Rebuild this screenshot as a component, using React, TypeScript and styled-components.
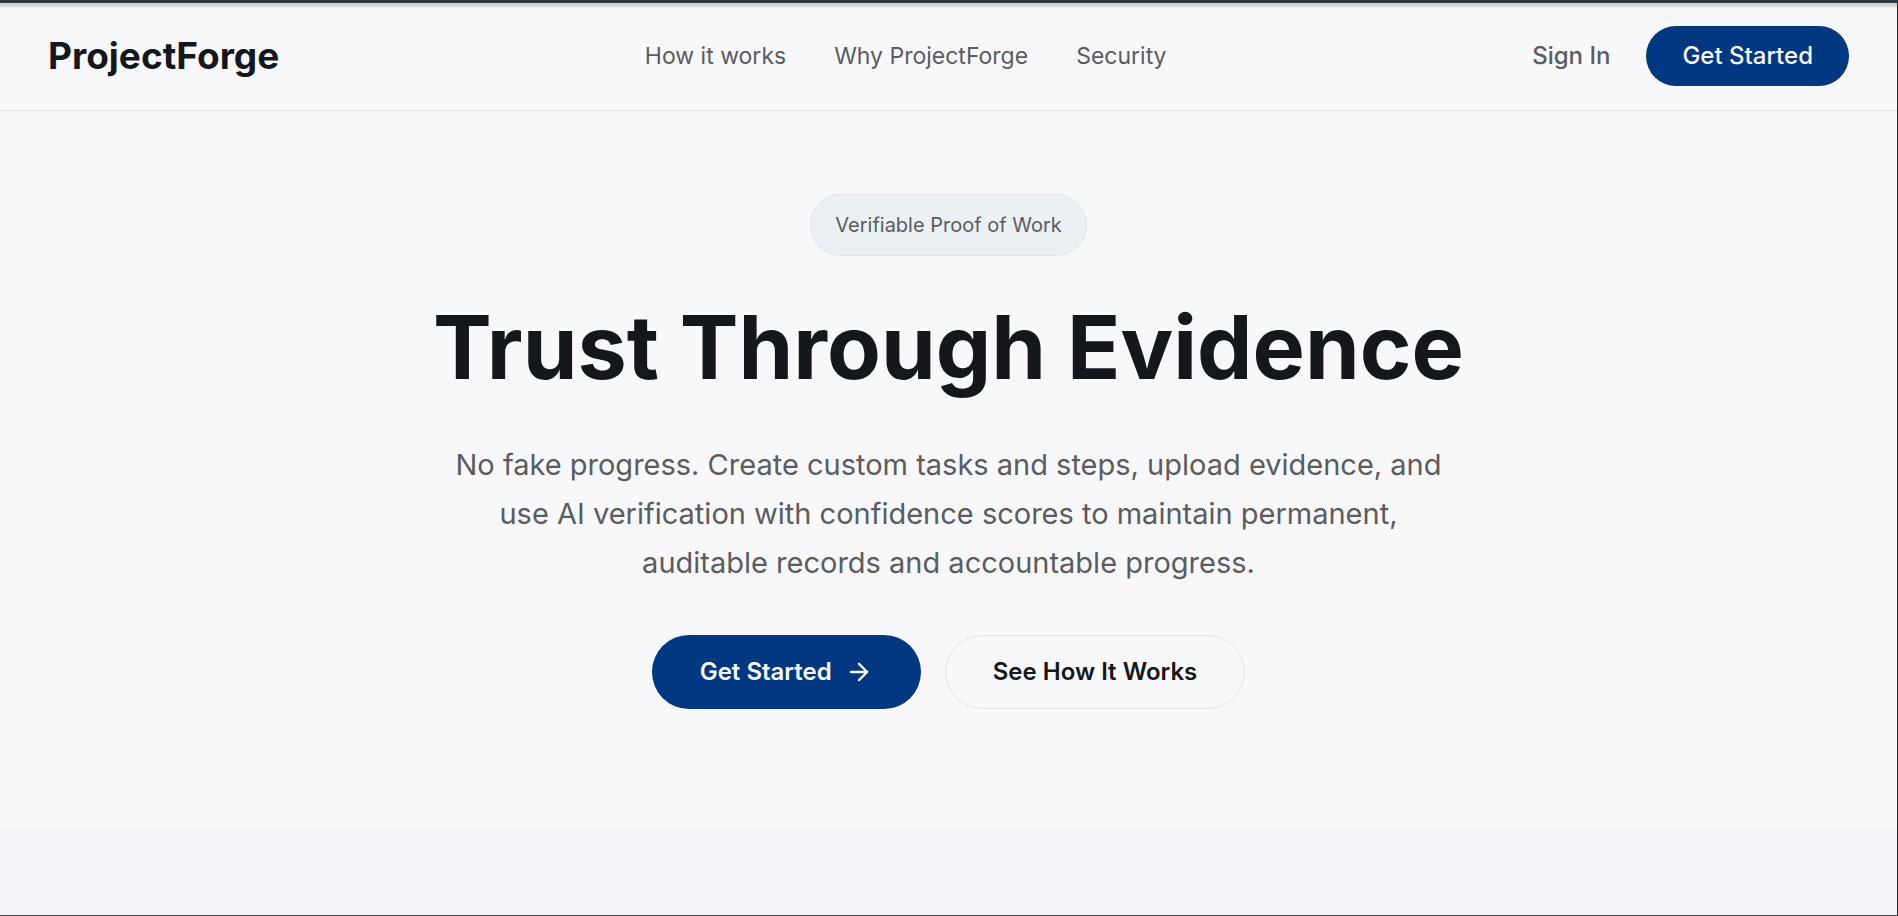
import React from 'react';
import styled, { createGlobalStyle, css } from 'styled-components';
import { ArrowRight } from 'lucide-react';

const GlobalStyle = createGlobalStyle`
  *, *::before, *::after { box-sizing: border-box; }
  body {
    margin: 0;
    background: #f8f8fb;
    color: #14181d;
    font-family: Inter, "Liberation Sans", sans-serif;
    font-size: 24px;
    line-height: 36px;
  }
`;

const Page = styled.div`
  min-height: 100vh;
  display: flex;
  flex-direction: column;
  border-top: 3px solid #303b48;
  border-right: 1px solid #26282c;
  border-bottom: 1px solid #45474b;
`;

const Header = styled.header`
  display: grid;
  grid-template-columns: auto auto auto;
  justify-content: space-between;
  align-items: center;
  padding: 23px 48px 24px;
  border-bottom: 1px solid #e2e4e8;
  background: linear-gradient(#cfcfd3 0, #d6d7db 3px, #f5f5f7 5px, #f8f8fb 32px);
`;

const Brand = styled.a`
  color: #14181d;
  font-size: 37px;
  font-weight: 700;
  text-decoration: none;
`;

const Nav = styled.nav`
  display: flex;
  gap: 48px;
`;

const NavLink = styled.a`
  color: #5a5c60;
  font-size: 23px;
  text-decoration: none;
`;

const SignIn = styled.a`
  color: #5a5c60;
  font-weight: 500;
  text-decoration: none;
`;

const Actions = styled.div`
  display: flex;
  align-items: center;
  gap: 36px;
`;

const Button = styled.button<{ $size?: 'small' | 'large'; $outline?: boolean }>`
  display: inline-flex;
  align-items: center;
  justify-content: center;
  gap: 13px;
  border: 0;
  border-radius: 40px;
  background: #003781;
  color: #f8f8fb;
  font: inherit;
  cursor: pointer;
  ${({ $size }) =>
    $size === 'large'
      ? css`
          padding: 19px 48px;
          font-weight: 600;
        `
      : css`
          padding: 12px 36px;
          font-weight: 500;
        `}
  ${({ $outline }) =>
    $outline &&
    css`
      background: transparent;
      border: 1px solid #e2e4e8;
      color: #14181d;
      padding: 18px 47px;
    `}
`;

const Hero = styled.main`
  display: flex;
  flex-direction: column;
  align-items: center;
  padding: 83px 48px 120px;
  text-align: center;
`;

const Badge = styled.p`
  margin: 0 0 46px;
  padding: 15px 24px;
  border: 1px solid #e2e4e8;
  border-radius: 32px;
  background: #ebf0f4;
  color: #5a5c60;
  font-size: 20px;
  line-height: 30px;
`;

const Title = styled.h1`
  margin: 0 0 48px;
  font-size: 88px;
  font-weight: 700;
  line-height: 90px;
`;

const Lead = styled.p`
  max-width: 1008px;
  margin: 0 0 48px;
  color: #5a5c60;
  font-size: 29px;
  line-height: 49px;
`;

const ButtonRow = styled.div`
  display: flex;
  flex-wrap: wrap;
  justify-content: center;
  gap: 24px;
`;

const NextSection = styled.section`
  flex: 1;
  min-height: 80px;
  background: #f3f5f9;
`;

export default function App() {
  return (
    <>
      <GlobalStyle />
      <Page>
        <Header>
          <Brand href="#">ProjectForge</Brand>
          <Nav aria-label="Main">
            <NavLink href="#how">How it works</NavLink>
            <NavLink href="#why">Why ProjectForge</NavLink>
            <NavLink href="#security">Security</NavLink>
          </Nav>
          <Actions>
            <SignIn href="#sign-in">Sign In</SignIn>
            <Button type="button">Get Started</Button>
          </Actions>
        </Header>
        <Hero>
          <Badge>Verifiable Proof of Work</Badge>
          <Title>Trust Through Evidence</Title>
          <Lead>
            No fake progress. Create custom tasks and steps, upload evidence, and use AI
            verification with confidence scores to maintain permanent, auditable records and
            accountable progress.
          </Lead>
          <ButtonRow>
            <Button type="button" $size="large">
              Get Started
              <ArrowRight size={28} aria-hidden="true" />
            </Button>
            <Button type="button" $size="large" $outline>See How It Works</Button>
          </ButtonRow>
        </Hero>
        <NextSection id="how" aria-label="How it works" />
      </Page>
    </>
  );
}
